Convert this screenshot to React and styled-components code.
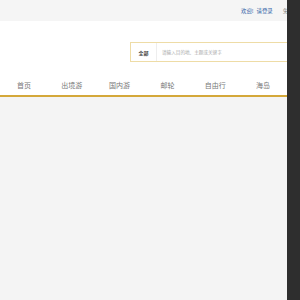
import React from 'react'
import styled, { createGlobalStyle } from 'styled-components'

const GlobalStyle = createGlobalStyle`
  html, body {
    margin: 0;
    padding: 0;
    background: #f4f4f4;
    font-family: "Noto Sans CJK SC", "Liberation Sans", sans-serif;
  }
`

const Shell = styled.div`
  display: grid;
  grid-template-columns: 1fr 13px;
  height: 100vh;
`

const Main = styled.div`
  overflow: hidden;
  background: #f4f4f4;
`

const SideBar = styled.div`
  background: #2e2e2e;
`

const TopBar = styled.div`
  height: 21px;
  background: #f5f5f5;
  display: flex;
  align-items: center;
  gap: 10px;
  padding-left: 241px;
  white-space: nowrap;
  font-size: 5.4px;
`

const Welcome = styled.span`
  color: #2f5da6;
  display: flex;
  gap: 3px;
`

const Muted = styled.span`
  color: #888;
`

const Header = styled.div`
  background: #fff;
  padding-top: 21px;
`

const Search = styled.div`
  margin-left: 130px;
  width: 220px;
  height: 18px;
  border: 1px solid #eedca6;
  display: flex;
  align-items: center;
  white-space: nowrap;
`

const Scope = styled.div`
  width: 25px;
  height: 100%;
  display: flex;
  align-items: center;
  justify-content: center;
  border-right: 1px solid #eee;
  font-size: 5px;
  font-weight: bold;
  color: #444;
`

const Placeholder = styled.div`
  padding-left: 5px;
  font-size: 4.6px;
  color: #aaa;
`

const Nav = styled.nav`
  margin-top: 13px;
  display: flex;
  border-bottom: 2px solid #d4a83a;
`

const NavItem = styled.div`
  flex: 1;
  height: 20px;
  display: flex;
  align-items: center;
  justify-content: center;
  font-size: 7px;
  color: #777;
`

const items = ['首页', '出境游', '国内游', '邮轮', '自由行', '海岛']

export default function App() {
  return (
    <Shell>
      <GlobalStyle />
      <Main>
        <TopBar>
          <Welcome>
            <span>欢迎!</span>
            <span>请登录</span>
          </Welcome>
          <Muted>免费注册</Muted>
        </TopBar>
        <Header>
          <Search>
            <Scope>全部</Scope>
            <Placeholder>请输入目的地、主题或关键字</Placeholder>
          </Search>
          <Nav>
            {items.map(item => (
              <NavItem key={item}>{item}</NavItem>
            ))}
          </Nav>
        </Header>
      </Main>
      <SideBar />
    </Shell>
  )
}
